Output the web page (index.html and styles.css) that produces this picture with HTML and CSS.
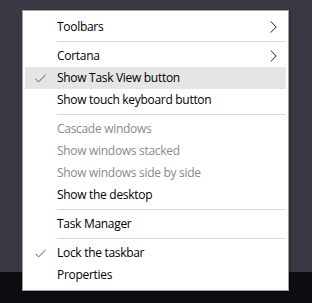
FILE: index.html
```html
<!doctype html>
<html lang="en">
<head>
	<meta charset="utf-8">
	<title>Taskbar menu</title>
	<link rel="stylesheet" href="styles.css">
</head>
<body>
	<div class="desktop">
		<ul class="menu">
			<li class="menu-item">Toolbars
				<svg class="menu-arrow" width="7" height="12" viewBox="0 0 7 12"><path d="M0.8 0.5 L6.2 6 L0.8 11.5" fill="none" stroke="#1a1a1a" stroke-width="1"/></svg>
			</li>
			<li class="menu-sep"></li>
			<li class="menu-item">Cortana
				<svg class="menu-arrow" width="7" height="12" viewBox="0 0 7 12"><path d="M0.8 0.5 L6.2 6 L0.8 11.5" fill="none" stroke="#1a1a1a" stroke-width="1"/></svg>
			</li>
			<li class="menu-item menu-item-hover menu-item-checked">
				<svg class="menu-check" width="11" height="9" viewBox="0 0 11 9"><path d="M0.5 4.8 L3.6 7.9 L10.5 1" fill="none" stroke="#555" stroke-width="1"/></svg>
				Show Task View button
			</li>
			<li class="menu-item">Show touch keyboard button</li>
			<li class="menu-sep"></li>
			<li class="menu-item menu-item-disabled">Cascade windows</li>
			<li class="menu-item menu-item-disabled">Show windows stacked</li>
			<li class="menu-item menu-item-disabled">Show windows side by side</li>
			<li class="menu-item">Show the desktop</li>
			<li class="menu-sep"></li>
			<li class="menu-item">Task Manager</li>
			<li class="menu-sep"></li>
			<li class="menu-item menu-item-checked">
				<svg class="menu-check" width="11" height="9" viewBox="0 0 11 9"><path d="M0.5 4.8 L3.6 7.9 L10.5 1" fill="none" stroke="#555" stroke-width="1"/></svg>
				Lock the taskbar
			</li>
			<li class="menu-item">Properties</li>
		</ul>
	</div>
	<div class="taskbar"></div>
</body>
</html>
```

FILE: styles.css
```css
* {
	box-sizing: border-box;
}
html,
body {
	margin: 0;
	height: 100%;
	overflow: hidden;
}
body {
	background: #0c0c11;
	font-family: "Open Sans", "Noto Sans", sans-serif;
	font-size: 12px;
	letter-spacing: -.3px;
	color: #000;
}

.desktop {
	height: 272px;
	background: #393943;
	padding: 10px 0 0 22px;
}
.taskbar {
	height: 31px;
}

.menu {
	position: relative;
	z-index: 1;
	list-style: none;
	margin: 0;
	width: 267px;
	padding: 5px 2px 4px;
	background: #fff;
	border: 1px solid #a0a0a0;
	box-shadow: 1px 1px 2px rgba(0, 0, 0, .35);
}
.menu-item {
	position: relative;
	height: 22px;
	line-height: 22px;
	padding-left: 32px;
	white-space: nowrap;
}
.menu-item-hover {
	background: #e5e5e5;
}
.menu-item-disabled {
	color: #8a8a8a;
}
.menu-sep {
	height: 1px;
	margin: 3px 0 3px 32px;
	background: #d9d9d9;
}
.menu-arrow {
	position: absolute;
	right: 9px;
	top: 5px;
}
.menu-check {
	position: absolute;
	left: 10px;
	top: 7px;
}
```
